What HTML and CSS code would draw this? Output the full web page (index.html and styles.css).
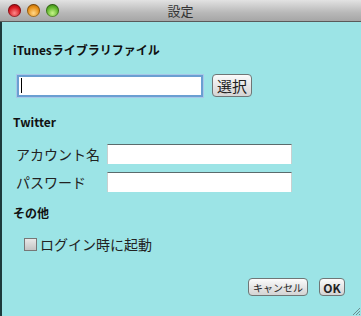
FILE: index.html
```html
<!DOCTYPE html>
<html lang="ja">
<head>
  <meta charset="UTF-8">
  <title>設定</title>
  <link rel="stylesheet" href="styles.css">
</head>
<body>
  <div class="window">
    <div class="titlebar">
      <div class="lights">
        <span class="light red"></span>
        <span class="light orange"></span>
        <span class="light green"></span>
      </div>
      <div class="title">設定</div>
    </div>

    <div class="content">
      <div class="heading h-itunes">iTunesライブラリファイル</div>
      <div class="file-row">
        <div class="field focused"><span class="caret"></span></div>
        <div class="btn btn-pick">選択</div>
      </div>

      <div class="heading h-twitter">Twitter</div>
      <div class="form-row first">
        <span class="label">アカウント名</span>
        <div class="field small"></div>
      </div>
      <div class="form-row">
        <span class="label">パスワード</span>
        <div class="field small"></div>
      </div>

      <div class="heading h-other">その他</div>
      <div class="check-row">
        <span class="checkbox"></span>
        <span class="check-label">ログイン時に起動</span>
      </div>

      <div class="actions">
        <div class="btn btn-small btn-cancel">キャンセル</div>
        <div class="btn btn-small btn-ok">OK</div>
      </div>

      <svg class="grip" width="10" height="10" viewBox="0 0 10 10">
        <path d="M9 2 L2 9 M9 5 L5 9 M9 8 L8 9" stroke="#6b8d8f" stroke-width="1"/>
      </svg>
    </div>
  </div>
</body>
</html>
```

FILE: styles.css
```css
body {
  margin: 0;
  font-family: "Noto Sans CJK JP", "DejaVu Sans", sans-serif;
  color: #111;
}

.window {
  width: 361px;
  height: 316px;
  display: flex;
  flex-direction: column;
  background-color: #9ce4e6;
  overflow: hidden;
}

.titlebar {
  height: 21px;
  flex: none;
  position: relative;
  display: flex;
  align-items: center;
  justify-content: center;
  background: linear-gradient(#e2e2e2, #b8b8b8 60%, #a6a6a6);
  border-bottom: 1px solid #5a5a5a;
}

.lights {
  position: absolute;
  left: 8px;
  top: 4px;
  display: flex;
  gap: 6px;
}

.light {
  width: 13px;
  height: 13px;
  border-radius: 50%;
  box-shadow: inset 0 0 0 1px rgba(0, 0, 0, 0.35);
}

.red {
  background: radial-gradient(circle at 50% 70%, #ff8a8a, #d4141c 55%, #8a0a10);
}

.orange {
  background: radial-gradient(circle at 50% 70%, #ffd88a, #e58d14 55%, #9a5206);
}

.green {
  background: radial-gradient(circle at 50% 70%, #c8f58a, #5cb329 55%, #2f6d10);
}

.title {
  font-size: 13px;
  color: #333;
  line-height: 21px;
}

.content {
  flex: 1;
  position: relative;
  border-left: 2px solid #1d3a3c;
  padding: 0 16px 0 11px;
}

.heading {
  font-size: 12px;
  font-weight: bold;
  line-height: 16px;
}

.h-itunes {
  margin-top: 20px;
}

.h-twitter {
  margin-top: 17px;
}

.h-other {
  margin-top: 13px;
}

.file-row {
  display: flex;
  align-items: center;
  gap: 9px;
  margin: 16px 0 0 4px;
}

.field {
  background: #fff;
  border-top: 1px solid #5b6b6c;
  box-sizing: border-box;
}

.field.focused {
  width: 186px;
  height: 22px;
  border: 2px solid #6a9fd2;
  box-shadow: 0 0 0 1px #a8c8e8;
  display: flex;
  align-items: center;
  padding-left: 2px;
}

.caret {
  width: 1px;
  height: 15px;
  background: #000;
}

.field.small {
  width: 185px;
  height: 20px;
  border-left: 1px solid #c8d0d0;
  border-right: 1px solid #c8d0d0;
}

.btn {
  box-sizing: border-box;
  display: flex;
  align-items: center;
  justify-content: center;
  border: 1px solid #6f7676;
  border-radius: 4px;
  background: linear-gradient(#fbfbfb, #e6e6e6 50%, #d4d4d4);
  color: #222;
}

.btn-pick {
  width: 40px;
  height: 23px;
  font-size: 15px;
}

.form-row {
  display: flex;
  align-items: center;
  margin: 8px 0 0 3px;
}

.form-row.first {
  margin-top: 14px;
}

.label {
  width: 91px;
  font-size: 14px;
  line-height: 20px;
  color: #222;
}

.check-row {
  display: flex;
  align-items: center;
  gap: 3px;
  margin: 14px 0 0 11px;
  height: 18px;
}

.checkbox {
  width: 11px;
  height: 11px;
  border: 1px solid #777;
  background: linear-gradient(#e8e8e8, #c4c4c4);
}

.check-label {
  font-size: 14px;
  color: #222;
}

.actions {
  display: flex;
  justify-content: flex-end;
  gap: 11px;
  margin-top: 25px;
}

.btn-small {
  height: 18px;
  font-size: 10px;
}

.btn-cancel {
  width: 60px;
}

.btn-ok {
  width: 26px;
  font-size: 12px;
  font-weight: bold;
}

.grip {
  position: absolute;
  right: 0;
  bottom: 0;
}
```
